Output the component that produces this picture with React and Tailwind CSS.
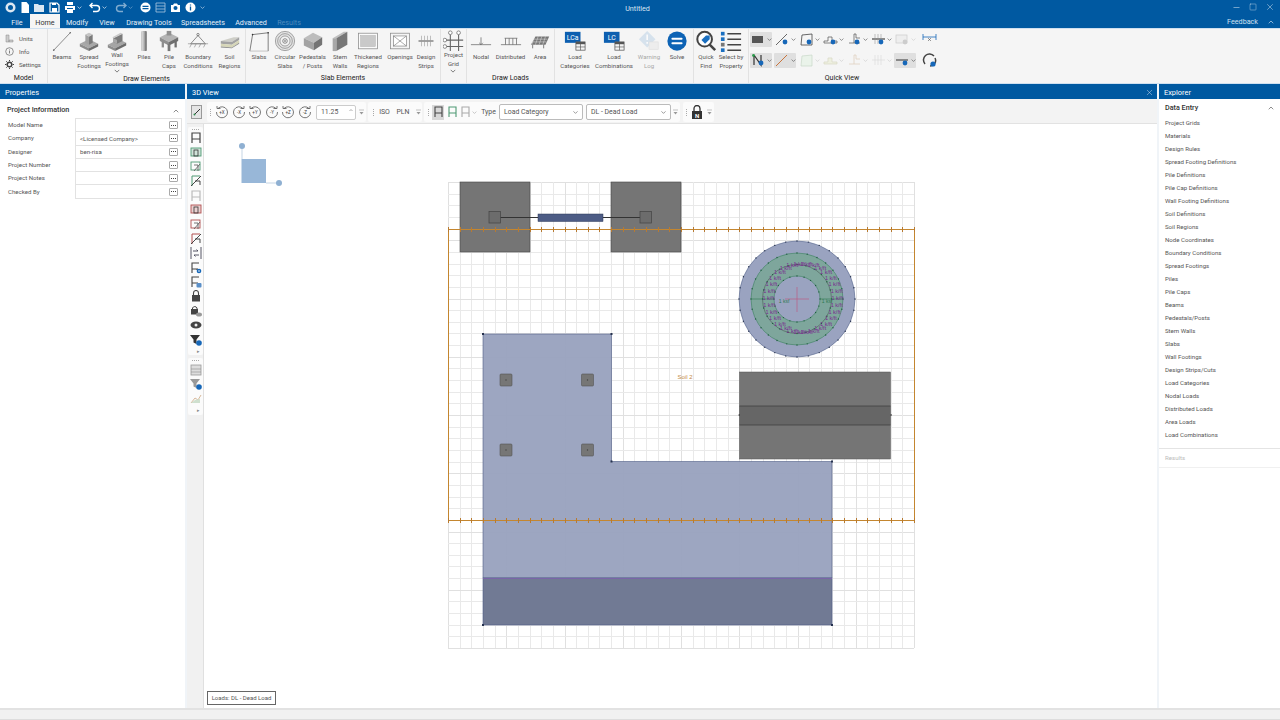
import { ChevronUp, ChevronDown, X, Minus, Square } from "lucide-react";

function Ico({ children, s = 22, box = 24 }) {
  return (
    <svg width={s} height={s} viewBox={`0 0 ${box} ${box}`} className="shrink-0">
      {children}
    </svg>
  );
}

function Chev({ className = "text-[#555]", size = 6 }) {
  return (
    <svg width={size} height={size} viewBox="0 0 8 8" className={className + " shrink-0"}>
      <path d="M1 2.5 4 5.5 7 2.5" fill="none" stroke="currentColor" strokeWidth="1" />
    </svg>
  );
}

function Caret() {
  return (
    <svg width="5" height="8" viewBox="0 0 5 8" className="shrink-0">
      <path d="M0 2h5" stroke="#aaa" strokeWidth=".7" />
      <path d="M.5 4h4L2.5 6.5z" fill="#999" />
    </svg>
  );
}

function Grip() {
  return (
    <div className="flex flex-col gap-[1px] w-[1px] mx-auto">
      <i className="block h-[1px] w-[1px] bg-[#aaa]" />
      <i className="block h-[1px] w-[1px] bg-[#aaa]" />
      <i className="block h-[1px] w-[1px] bg-[#aaa]" />
      <i className="block h-[1px] w-[1px] bg-[#aaa]" />
    </div>
  );
}

function Table({ x = 13, y = 13 }) {
  return (
    <g>
      <rect x={x} y={y} width="10" height="9" fill="#f4f4f4" stroke="#555" strokeWidth=".8" />
      <rect x={x} y={y} width="10" height="2.5" fill="#555" />
      <path d={`M${x + 5} ${y}v9M${x} ${y + 5.5}h10`} stroke="#555" strokeWidth=".7" />
    </g>
  );
}

const icons = {
  beams: (
    <Ico>
      <path d="M3 22 21 3" stroke="#777" strokeWidth=".9" />
      <circle cx="3" cy="22" r=".9" fill="#666" />
      <circle cx="21" cy="3" r=".9" fill="#666" />
    </Ico>
  ),
  spread: (
    <Ico>
      <path d="M2 15 12 10l10 5-10 5z" fill="#a8a8a8" />
      <path d="M2 15l10 5v3L2 18z" fill="#8c8c8c" />
      <path d="M22 15l-10 5v3l10-5z" fill="#6e6e6e" />
      <path d="M8 5v9l4 2V7z" fill="#a2a2a2" />
      <path d="M16 5v9l-4 2V7z" fill="#7b7b7b" />
      <path d="M8 5l4-2 4 2-4 2z" fill="#c4c4c4" />
    </Ico>
  ),
  wall: (
    <Ico>
      <path d="M2 16 14 10l8 4-12 6z" fill="#a5a5a5" />
      <path d="M2 16l8 4v3l-8-4z" fill="#8c8c8c" />
      <path d="M22 14 10 20v3l12-6z" fill="#6b6b6b" />
      <path d="M8 9l10-5v8l-6 3-4-2z" fill="#7b7b7b" />
      <path d="M8 9l4 2v4l-4-2z" fill="#a8a8a8" />
      <path d="M8 9 18 4l-2-1L7 8z" fill="#c8c8c8" />
    </Ico>
  ),
  piles: (
    <Ico>
      <rect x="9" y="1" width="6" height="22" rx="2" fill="#a8a8a8" />
      <rect x="9" y="1" width="2.5" height="22" rx="1" fill="#d0d0d0" />
      <rect x="13" y="1" width="2" height="22" rx="1" fill="#808080" />
    </Ico>
  ),
  caps: (
    <Ico>
      <path d="M2 8 12 3l10 5-10 5z" fill="#b4b4b4" />
      <path d="M2 8l10 5v4L2 12z" fill="#8e8e8e" />
      <path d="M22 8l-10 5v4l10-5z" fill="#6f6f6f" />
      <rect x="10.5" y="15" width="3" height="8" fill="#777" />
      <rect x="4" y="11" width="2.5" height="8" fill="#8d8d8d" />
      <rect x="18" y="11" width="2.5" height="8" fill="#6f6f6f" />
      <rect x="9.5" y="1" width="5" height="5" fill="#909090" />
    </Ico>
  ),
  boundary: (
    <Ico>
      <circle cx="12" cy="5" r="1.3" fill="none" stroke="#666" strokeWidth=".8" />
      <path d="M12 6 4 15h16z" fill="none" stroke="#666" strokeWidth=".8" />
      <path d="M1 15h22M3 19l2-4M8 19l2-4M13 19l2-4M18 19l2-4" stroke="#888" strokeWidth=".7" />
    </Ico>
  ),
  soil: (
    <Ico>
      <path d="M2 12 16 8h6l-8 5z" fill="#cfcfc8" />
      <path d="M2 12l12 1 8-5v3l-8 5-12-1z" fill="#a3a3a3" />
      <path d="M2 15l12 1 8-5v3l-8 5-12-1z" fill="#d6d6b8" />
      <path d="M2 18l12 1 8-5v1l-8 5-12-1z" fill="#8a8a8a" />
    </Ico>
  ),
  slabs: (
    <Ico>
      <path d="M2 23 5 5l17-2v20" fill="none" stroke="#555" strokeWidth=".8" />
      <path d="M2 23h20" stroke="#aaa" strokeWidth=".7" />
      <circle cx="5" cy="5" r=".9" fill="#333" />
      <circle cx="22" cy="3" r=".9" fill="#333" />
    </Ico>
  ),
  circular: (
    <Ico>
      <circle cx="12" cy="12" r="10.5" fill="#e2e2e2" stroke="#888" strokeWidth=".8" />
      <circle cx="12" cy="12" r="8" fill="none" stroke="#888" strokeWidth=".8" />
      <circle cx="12" cy="12" r="5.5" fill="#f3f3f3" stroke="#888" strokeWidth=".8" />
      <circle cx="12" cy="12" r="2.5" fill="none" stroke="#666" strokeWidth=".8" />
      <circle cx="12" cy="12" r=".8" fill="#444" />
    </Ico>
  ),
  pedestal: (
    <Ico>
      <path d="M2 9 12 3l10 5-9 6z" fill="#bdbdbd" />
      <path d="M2 9l11 5v8L2 17z" fill="#a3a3a3" />
      <path d="M22 8l-9 6v8l9-6z" fill="#747474" />
    </Ico>
  ),
  stem: (
    <Ico>
      <path d="M4 9 16 2h4L8 9z" fill="#c0c0c0" />
      <path d="M8 9 20 2v14L8 23z" fill="#777" />
      <path d="M4 9h4v14H4z" fill="#a8a8a8" />
    </Ico>
  ),
  thick: (
    <Ico>
      <rect x="1.5" y="3.5" width="21" height="17" fill="#fafafa" stroke="#888" strokeWidth=".8" />
      <rect x="4" y="6" width="16" height="12" fill="#c9c9c9" stroke="#aaa" strokeWidth=".5" />
    </Ico>
  ),
  openings: (
    <Ico>
      <rect x="1.5" y="3.5" width="21" height="17" fill="#f5f5f5" stroke="#888" strokeWidth=".8" />
      <rect x="5" y="6.5" width="14" height="11" fill="#fff" stroke="#666" strokeWidth=".6" />
      <path d="M5 6.5l14 11M19 6.5 5 17.5" stroke="#666" strokeWidth=".6" />
    </Ico>
  ),
  strips: (
    <Ico s={18}>
      <path d="M2 12h20" stroke="#555" strokeWidth="1.4" />
      <path d="M6 5v14M10 5v14M14 5v14M18 5v14" stroke="#999" strokeWidth=".8" />
    </Ico>
  ),
  grid: (
    <Ico>
      <path d="M8 5v18M17 5v18M1 11h21M1 18h21" stroke="#666" strokeWidth="1.2" />
      <circle cx="8" cy="3" r="2" fill="#fff" stroke="#666" strokeWidth=".8" />
      <circle cx="17" cy="3" r="2" fill="#fff" stroke="#666" strokeWidth=".8" />
      <circle cx="2" cy="11" r="2" fill="#fff" stroke="#666" strokeWidth=".8" />
      <circle cx="2" cy="18" r="2" fill="#fff" stroke="#666" strokeWidth=".8" />
    </Ico>
  ),
  nodal: (
    <Ico>
      <path d="M1 16h22" stroke="#666" strokeWidth=".8" />
      <path d="M12 8v8M10 14l2 2 2-2" stroke="#666" strokeWidth=".8" fill="none" />
    </Ico>
  ),
  distributed: (
    <Ico>
      <path d="M1 16h22M5 9h14M6 9v7M10 9v7M14 9v7M18 9v7" stroke="#666" strokeWidth=".8" />
    </Ico>
  ),
  area: (
    <Ico>
      <path d="M2 16 7 7h15l-4 9z" fill="#777" />
      <path d="M6 7l-3 9M10 7l-3 9M14 7l-3 9M18 7l-3 9M4 10h16M3 13h16" stroke="#eee" strokeWidth=".5" />
      <path d="M4 16v4M16 16v4" stroke="#555" strokeWidth=".8" />
    </Ico>
  ),
  lca: (
    <Ico>
      <rect x="1" y="2" width="17" height="12" fill="#0d5fb0" />
      <text x="9.5" y="11" fontSize="7.5" fill="#fff" textAnchor="middle" fontFamily="Roboto">LCa</text>
      <Table />
    </Ico>
  ),
  lc: (
    <Ico>
      <rect x="1" y="2" width="17" height="12" fill="#0d5fb0" />
      <text x="9.5" y="11" fontSize="7.5" fill="#fff" textAnchor="middle" fontFamily="Roboto">LC</text>
      <Table />
    </Ico>
  ),
  warning: (
    <Ico>
      <path d="M10 1 19 10 10 19 1 10z" fill="#b8d0e6" />
      <path d="M10 5v6M10 13v2" stroke="#fff" strokeWidth="1.8" />
      <rect x="12" y="13" width="10" height="8" fill="#e6e6e6" stroke="#c4c4c4" strokeWidth=".6" />
    </Ico>
  ),
  solve: (
    <Ico>
      <circle cx="12" cy="12" r="10.5" fill="#0d63b5" />
      <path d="M7 9.5h10M7 14.5h10" stroke="#fff" strokeWidth="2.2" strokeLinecap="round" />
    </Ico>
  ),
  find: (
    <Ico>
      <circle cx="10.5" cy="10" r="8" fill="#fff" stroke="#444" strokeWidth="2.2" />
      <path d="M16 16l6 6" stroke="#444" strokeWidth="2.8" />
      <path d="M7 11l5-5h4v4l-5 5z" fill="#1a6fc0" />
    </Ico>
  ),
  select: (
    <Ico>
      <path d="M8 4h15M8 10h15M8 16h15M8 22h15" stroke="#444" strokeWidth="1.6" />
      <rect x="1" y="2" width="4" height="4" fill="#1a6fc0" />
      <rect x="1" y="8" width="4" height="4" fill="#1a6fc0" />
      <rect x="1" y="14" width="4" height="4" fill="#777" />
      <rect x="1" y="20" width="4" height="4" fill="#1a6fc0" />
    </Ico>
  ),
};

const ribbon = [
  {
    label: "Draw Elements", w: 198,
    items: [
      { w: 28, i: "beams", t: ["Beams"] },
      { w: 26, i: "spread", t: ["Spread", "Footings"] },
      { w: 30, i: "wall", t: ["Wall", "Footings"], up: true },
      { w: 24, i: "piles", t: ["Piles"] },
      { w: 26, i: "caps", t: ["Pile", "Caps"] },
      { w: 32, i: "boundary", t: ["Boundary", "Conditions"] },
      { w: 31, i: "soil", t: ["Soil", "Regions"] },
    ],
  },
  {
    label: "Slab Elements", w: 195,
    items: [
      { w: 26, i: "slabs", t: ["Slabs"] },
      { w: 26, i: "circular", t: ["Circular", "Slabs"] },
      { w: 29, i: "pedestal", t: ["Pedestals", "/ Posts"] },
      { w: 26, i: "stem", t: ["Stem", "Walls"] },
      { w: 30, i: "thick", t: ["Thickened", "Regions"] },
      { w: 34, i: "openings", t: ["Openings"] },
      { w: 18, i: "strips", t: ["Design", "Strips"] },
    ],
  },
  { label: "", w: 26, items: [{ w: 25, i: "grid", t: ["Project", "Grid"], up: true }] },
  {
    label: "Draw Loads", w: 88,
    items: [
      { w: 28, i: "nodal", t: ["Nodal"] },
      { w: 31, i: "distributed", t: ["Distributed"] },
      { w: 28, i: "area", t: ["Area"] },
    ],
  },
  {
    label: "", w: 139,
    items: [
      { w: 40, i: "lca", t: ["Load", "Categories"] },
      { w: 38, i: "lc", t: ["Load", "Combinations"] },
      { w: 32, i: "warning", t: ["Warning", "Log"], off: true },
      { w: 24, i: "solve", t: ["Solve"] },
    ],
  },
  {
    label: "", w: 55,
    items: [
      { w: 24, i: "find", t: ["Quick", "Find"] },
      { w: 26, i: "select", t: ["Select by", "Property"] },
    ],
  },
];

const qvPin = <circle cx="10" cy="10" r="2.4" fill="#1667b8" />;

const quickView = [
  { on: true, g: <rect x="1" y="4" width="11" height="7" fill="#555" /> },
  { g: <><path d="M1 13 12 2" stroke="#444" strokeWidth=".8" />{qvPin}</> },
  { g: <><path d="M2 13 3 3l10-1v11z" fill="none" stroke="#444" strokeWidth=".8" />{qvPin}</> },
  { g: <><path d="M1 9h4V5h4v4h5v2H1z" fill="none" stroke="#555" strokeWidth=".7" />{qvPin}</> },
  { g: <><path d="M2 11h5V2h2v4h4M7 11h6" fill="none" stroke="#555" strokeWidth=".7" />{qvPin}</> },
  { g: <><path d="M1 7h13" stroke="#444" strokeWidth="1.2" /><path d="M4 2v10M7 2v10M10 2v10" stroke="#999" strokeWidth=".6" />{qvPin}</> },
  { faded: true, g: <><rect x="1" y="3" width="11" height="8" fill="#eee" stroke="#ccc" strokeWidth=".7" /><circle cx="10" cy="10" r="2.4" fill="#ccc" /></> },
  { plain: true, g: <><path d="M1 5h13M1 2v6M14 2v6" stroke="#1667b8" strokeWidth=".8" /><path d="M6 6l3 3M9 6 6 9" stroke="#555" strokeWidth=".6" /></> },
  { on: true, g: <><path d="M3 2v10M3 2l7 10V2" fill="none" stroke="#333" strokeWidth="1.2" /><circle cx="2.5" cy="2.5" r="1.4" fill="#2a9a4a" />{qvPin}</> },
  { on: true, g: <path d="M1 13 12 2" stroke="#c8743c" strokeWidth="1" /> },
  { faded: true, g: <path d="M2 13 3 3l10-1v11z" fill="#eaf3ea" stroke="#c8d8c8" strokeWidth=".7" /> },
  { faded: true, g: <path d="M1 9h4V5h4v4h5v2H1z" fill="#eef0e0" stroke="#d8d8c4" strokeWidth=".7" /> },
  { faded: true, g: <path d="M2 11h5V2h2v4h4M7 11h6" fill="none" stroke="#e0d0c0" strokeWidth=".8" /> },
  { faded: true, g: <path d="M1 7h13M4 2v10M7 2v10M10 2v10" stroke="#ddd" strokeWidth=".7" /> },
  { on: true, g: <><path d="M1 7h12" stroke="#888" strokeWidth="2" />{qvPin}</> },
  { plain: true, g: <><path d="M3 11A5.5 5.5 0 0 1 12 3M13 5a5.500 5.500 0 0 1-5 8" fill="none" stroke="#444" strokeWidth="1.5" /><circle cx="11" cy="11" r="2.6" fill="#1667b8" /></> },
];

function RibbonItem({ item }) {
  return (
    <div style={{ width: item.w }} className={"flex flex-col items-center shrink-0" + (item.off ? " opacity-50" : "")}>
      <div className="h-[22px] mt-[1px] flex items-center justify-center">{icons[item.i]}</div>
      <div className={"flex flex-col items-center whitespace-nowrap leading-[9px] text-[6.1px] text-[#555]" + (item.up ? " -mt-[2px]" : "")}>
        {item.t.map((l) => (
          <span key={l}>{l}</span>
        ))}
        {item.up && <Chev size={6} />}
      </div>
    </div>
  );
}

function RibbonGroup({ group }) {
  return (
    <div style={{ width: group.w }} className="shrink-0 flex flex-col border-r border-[#e2e2e2]">
      <div className="flex h-[44px]">
        {group.items.map((it) => (
          <RibbonItem key={it.i} item={it} />
        ))}
      </div>
      <div className="h-[11px] pt-[1px] leading-[11px] text-center text-[7px] text-[#222]">{group.label}</div>
    </div>
  );
}

function Ribbon() {
  return (
    <div className="h-[56px] flex bg-[#f5f5f5] border-t border-b border-[#cfe0f0] shrink-0">
      <div className="w-[48px] shrink-0 flex flex-col border-r border-[#e2e2e2]">
        <div className="h-[44px] flex flex-col pt-[3px] pl-[5px] text-[6px] text-[#555]">
          <div className="h-[13px] flex items-center gap-[5px]">
            <svg width="9" height="9" viewBox="0 0 9 9"><path d="M1 1h3v7H1zM4 6h4v2H4z" fill="#ccc" stroke="#888" strokeWidth=".5" /></svg>
            Units
          </div>
          <div className="h-[13px] flex items-center gap-[5px]">
            <svg width="9" height="9" viewBox="0 0 9 9"><circle cx="4.500" cy="4.500" r="3.800" fill="none" stroke="#666" strokeWidth=".7" /><path d="M4.500 2.500v1M4.500 4v2.500" stroke="#666" strokeWidth=".8" /></svg>
            Info
          </div>
          <div className="h-[13px] flex items-center gap-[5px]">
            <svg width="9" height="9" viewBox="0 0 9 9"><circle cx="4.500" cy="4.500" r="2.300" fill="none" stroke="#444" strokeWidth="1.500" /><path d="M4.500 0v9M0 4.500h9M1.300 1.300l6.400 6.400M7.700 1.300 1.300 7.700" stroke="#444" strokeWidth="1" strokeDasharray="1.300 6.400" /></svg>
            Settings
          </div>
        </div>
        <div className="h-[11px] pt-[1px] leading-[11px] text-center text-[7px] text-[#222]">Model</div>
      </div>
      {ribbon.map((g, i) => (
        <RibbonGroup key={i} group={g} />
      ))}
      <div className="w-[186px] shrink-0 flex flex-col">
        <div className="h-[44px] pt-[1px] pl-[1px] grid grid-cols-[repeat(8,24px)] auto-rows-[21px]">
          {quickView.map((q, i) => (
            <div key={i} className={"flex items-center justify-center gap-[1px] h-[15px] mt-[2px] w-[22px] rounded-[1px]" + (q.on ? " bg-[#dfdfdf]" : "")}>
              <svg width="15" height="15" viewBox="0 0 15 15" className="shrink-0">{q.g}</svg>
              {!q.plain && <Chev size={5} className={q.faded ? "text-[#ccc]" : "text-[#555]"} />}
            </div>
          ))}
        </div>
        <div className="h-[11px] pt-[1px] leading-[11px] text-center text-[7px] text-[#222]">Quick View</div>
      </div>
    </div>
  );
}

function QuickAccess() {
  return (
    <div className="flex items-center h-[14px] pl-[5px] gap-[4px] text-white">
      <svg width="11" height="11" viewBox="0 0 11 11"><circle cx="5.500" cy="5.500" r="5" fill="#dbe7f2" /><circle cx="5.500" cy="5.500" r="2.500" fill="#0059a1" /></svg>
      <svg width="10" height="11" viewBox="0 0 10 11"><path d="M1.500 0h5l2.500 3v8h-7.500z" fill="#fff" /></svg>
      <svg width="11" height="11" viewBox="0 0 11 11"><path d="M0 2h4l1 1h5v7H0z" fill="#dbe7f2" /></svg>
      <svg width="11" height="11" viewBox="0 0 11 11"><path d="M1 1h7l2 2v7H1z" fill="none" stroke="#fff" strokeWidth="1.200" /><path d="M3 6h5v4H3zM3 1h4v2H3z" fill="#fff" /></svg>
      <div className="flex items-center gap-[1px]">
        <svg width="12" height="11" viewBox="0 0 12 11"><path d="M3 0h6v3H3zM1 4h10v4H9V6H3v2H1zM3 7h6v4H3z" fill="#fff" /></svg>
        <Chev size={5} className="text-white" />
      </div>
      <div className="flex items-center gap-[1px] ml-[3px]">
        <svg width="12" height="11" viewBox="0 0 12 11"><path d="M3.500 1 1 3.500 3.500 6M1 3.500h6.500a3 3 0 0 1 0 6H4" fill="none" stroke="#fff" strokeWidth="1.400" /></svg>
        <Chev size={5} className="text-white" />
      </div>
      <div className="flex items-center gap-[1px] ml-[4px] opacity-50">
        <svg width="12" height="11" viewBox="0 0 12 11"><path d="M8.500 1 11 3.500 8.500 6M11 3.500H4.500a3 3 0 0 0 0 6H8" fill="none" stroke="#fff" strokeWidth="1.400" /></svg>
        <Chev size={5} className="text-white" />
      </div>
      <svg width="11" height="11" viewBox="0 0 11 11" className="ml-[3px]"><circle cx="5.500" cy="5.500" r="5" fill="#fff" /><path d="M2.500 4.300h6M2.500 6.700h6" stroke="#0059a1" strokeWidth="1.200" /></svg>
      <svg width="11" height="11" viewBox="0 0 11 11"><path d="M1 1h9v9H1zM1 4h9M1 7h9" fill="none" stroke="#a9c6e0" strokeWidth=".8" /></svg>
      <svg width="11" height="11" viewBox="0 0 11 11"><path d="M1 3h2l1-1.500h3L8 3h2v7H1z" fill="#fff" /><circle cx="5.500" cy="6" r="2" fill="#0059a1" /></svg>
      <svg width="11" height="11" viewBox="0 0 11 11"><circle cx="5.500" cy="5.500" r="5" fill="#fff" /><path d="M5.500 2.500v1M5.500 4.500v4" stroke="#0059a1" strokeWidth="1.300" /></svg>
      <Chev size={5} className="text-[#cfe0f0]" />
    </div>
  );
}

const tabs = [
  ["File", 26],
  ["Home", 30],
  ["Modify", 34],
  ["View", 26],
  ["Drawing Tools", 58],
  ["Spreadsheets", 50],
  ["Advanced", 46],
  ["Results", 30],
];

function TitleBar() {
  return (
    <div className="h-[28px] bg-[#0059a1] text-white shrink-0 flex flex-col">
      <div className="flex h-[14px]">
        <div className="flex-1">
          <QuickAccess />
        </div>
        <div className="text-[7.2px] pt-[1px] leading-[15px] text-[#dbe7f2]">Untitled</div>
        <div className="flex-1 flex justify-end items-center pr-[5px] gap-[8px]">
          <Minus size={9} strokeWidth={1.2} />
          <Square size={8} strokeWidth={1} />
          <X size={10} strokeWidth={1} />
        </div>
      </div>
      <div className="flex h-[14px] pl-[4px] text-[7.2px]">
        {tabs.map(([t, w]) => (
          <div
            key={t}
            style={{ width: w }}
            className={
              "shrink-0 text-center leading-[15px] pt-[1px] " +
              (t === "Home" ? "bg-[#f5f5f5] text-[#333]" : t === "Results" ? "text-[#4d8bbd]" : "text-[#e6eff7]")
            }
          >
            {t}
          </div>
        ))}
        <div className="flex-1 flex justify-end items-center pr-[5px] pt-[2px] gap-[9px] text-[#cfe0f0]">
          <span>Feedback</span>
          <ChevronUp size={8} />
        </div>
      </div>
    </div>
  );
}

function PanelHead({ title, children }) {
  return (
    <div className="h-[15px] pt-[2px] bg-[#0059a1] text-white text-[7.4px] flex items-center justify-between shrink-0 pl-[5px] pr-[3px]">
      <span>{title}</span>
      {children}
    </div>
  );
}

const props = [
  ["Model Name", ""],
  ["Company", "<Licensed Company>"],
  ["Designer", "ben-risa"],
  ["Project Number", ""],
  ["Project Notes", ""],
  ["Checked By", ""],
];

function Properties() {
  return (
    <div className="w-[185px] shrink-0 flex flex-col bg-white">
      <PanelHead title="Properties" />
      <div className="flex items-center justify-between h-[19px] pt-[4px] pl-[7px] pr-[5px] text-[7.2px] font-medium text-[#333]">
        <span>Project Information</span>
        <ChevronUp size={8} className="text-[#555]" />
      </div>
      <div className="flex flex-col pl-[8px] pr-[3px]">
        {props.map(([k, v]) => (
          <div key={k} className="flex h-[13.3px] items-center text-[6.1px] text-[#555]">
            <span className="w-[67px] shrink-0">{k}</span>
            <div className="flex-1 h-full flex items-center justify-between border border-b-0 border-[#e2e2e2] pl-[4px] pr-[3px]">
              <span>{v}</span>
              <span className="h-[8px] w-[9px] flex items-center justify-center gap-[1px] border border-[#aaa] rounded-[1px]">
                <i className="block w-[1px] h-[1px] bg-[#444]" />
                <i className="block w-[1px] h-[1px] bg-[#444]" />
                <i className="block w-[1px] h-[1px] bg-[#444]" />
              </span>
            </div>
          </div>
        ))}
        <div className="ml-[67px] border-t border-[#e2e2e2]" />
      </div>
    </div>
  );
}

const rotations = [
  ["+X", false],
  ["-X", true],
  ["+Y", false],
  ["-Y", true],
  ["+Z", false],
  ["-Z", true],
];

function Rotate({ label, cw }) {
  return (
    <svg width="14" height="14" viewBox="0 0 14 14">
      <path
        d={cw ? "M11 3.500A5.500 5.500 0 1 0 12.500 7" : "M3 3.500A5.500 5.500 0 1 1 1.500 7"}
        fill="none"
        stroke="#555"
        strokeWidth=".8"
      />
      <path d={cw ? "M8.500 3.500H12V1" : "M5.500 3.500H2V1"} fill="none" stroke="#555" strokeWidth=".8" />
      <text x="7" y="9" fontSize="4.500" textAnchor="middle" fill="#444" fontFamily="Roboto">{label}</text>
    </svg>
  );
}

function Rr({ c = "#444" }) {
  return (
    <svg width="9" height="12" viewBox="0 0 9 12">
      <path d="M1 11V1h7v10M1 7h7" fill="none" stroke={c} strokeWidth="1.100" />
    </svg>
  );
}

function Select({ w, text }) {
  return (
    <div style={{ width: w }} className="h-[16px] shrink-0 border border-[#bbb] rounded-[2px] bg-white flex items-center justify-between pl-[4px] pr-[3px] text-[6.9px] text-[#555]">
      <span>{text}</span>
      <ChevronDown size={7} className="text-[#555]" />
    </div>
  );
}

function Section({ w, children }) {
  return (
    <div style={{ width: w }} className="h-[20px] shrink-0 flex items-center bg-[#fbfbfb] rounded-[2px]">
      {children}
    </div>
  );
}

function TopTools() {
  return (
    <div className="h-[25px] pt-[2px] shrink-0 bg-[#f3f3f3] border-b border-[#e2e2e2] flex items-center pl-[4px] text-[6.9px] text-[#555]">
      <div className="w-[11px] h-[14px] border border-[#999] bg-[#e4e4e4] flex items-center justify-center shrink-0">
        <svg width="8" height="8" viewBox="0 0 8 8"><path d="M1 7 7 1" stroke="#333" strokeWidth="1" /><circle cx="1.500" cy="6.500" r="1" fill="#2a8a4a" /></svg>
      </div>
      <div className="w-[5px] shrink-0" />
      <Section w={159}>
        <div className="w-[7px] shrink-0"><Grip /></div>
        {rotations.map(([l, cw]) => (
          <div key={l} className="w-[16.5px] shrink-0 flex justify-center"><Rotate label={l} cw={cw} /></div>
        ))}
        <div className="w-[40px] h-[15px] ml-[3px] shrink-0 border border-[#ccc] rounded-[2px] bg-white flex items-center justify-between pl-[4px] pr-[2px]">
          <span>11.25</span>
          <svg width="4" height="8" viewBox="0 0 4 8"><path d="M.5 3 2 1.500 3.500 3" fill="none" stroke="#777" strokeWidth=".6" /></svg>
        </div>
        <div className="w-[10px] shrink-0 flex justify-center"><Caret /></div>
      </Section>
      <div className="w-[2px] shrink-0" />
      <Section w={54}>
        <div className="w-[10px] shrink-0"><Grip /></div>
        <span className="w-[13px] text-center shrink-0">ISO</span>
        <span className="w-[24px] text-center shrink-0">PLN</span>
        <div className="w-[7px] flex justify-center shrink-0"><Caret /></div>
      </Section>
      <div className="w-[2px] shrink-0" />
      <Section w={256}>
        <div className="w-[8px] shrink-0"><Grip /></div>
        <div className="w-[12px] h-[15px] mr-[1px] shrink-0 bg-[#d8d8d8] flex items-center justify-center"><Rr /></div>
        <div className="w-[14px] shrink-0 flex justify-center"><Rr c="#4f9a74" /></div>
        <div className="w-[12px] shrink-0 flex justify-center"><Rr c="#aaa" /></div>
        <div className="w-[7px] shrink-0 flex justify-center"><Chev size={5} className="text-[#aaa]" /></div>
        <span className="w-[21px] shrink-0 text-center">Type</span>
        <Select w={84} text="Load Category" />
        <div className="w-[3px] shrink-0" />
        <Select w={85} text="DL - Dead Load" />
        <div className="w-[9px] shrink-0 flex justify-center"><Caret /></div>
      </Section>
      <div className="w-[3px] shrink-0" />
      <Section w={31}>
        <div className="w-[6px] shrink-0"><Grip /></div>
        <div className="w-[16px] shrink-0 flex justify-center">
          <svg width="12" height="15" viewBox="0 0 12 15"><path d="M3 6V3.500a3 3 0 0 1 6 0V6" fill="none" stroke="#333" strokeWidth="1.300" /><rect x="1" y="6" width="10" height="8" fill="#333" /><text x="6" y="12.800" fontSize="6" fill="#fff" textAnchor="middle" fontFamily="Roboto" fontWeight="700">N</text></svg>
        </div>
        <div className="w-[9px] shrink-0 flex justify-center"><Caret /></div>
      </Section>
    </div>
  );
}

function SideIcon({ c = "#444", shape }) {
  return (
    <svg width="12" height="12" viewBox="0 0 12 12">
      {shape === "r" && <path d="M2 11V1h8v10M2 7h8" fill="none" stroke={c} strokeWidth="1.200" />}
      {shape === "box" && <><rect x="1" y="1" width="10" height="8" fill={c} fillOpacity=".25" stroke={c} strokeWidth=".9" /><rect x="4" y="3" width="4" height="6" fill="none" stroke="#333" strokeWidth=".8" /></>}
      {shape === "slant" && <><rect x="1" y="1" width="9" height="8" fill="none" stroke={c} strokeWidth=".9" /><path d="M4 10 10 3M4 4h4v6" fill="none" stroke="#555" strokeWidth=".8" /></>}
      {shape === "cross" && <><path d="M2 11V1h8" fill="none" stroke={c} strokeWidth="1" /><path d="M1 11 11 1M5 6h5v4" fill="none" stroke="#333" strokeWidth=".9" /></>}
      {shape === "arrows" && <path d="M1 0v12M11 0v12M3 4h5M8 4 6.500 2.500M9 8H4M4 8l1.500 1.500" fill="none" stroke="#445" strokeWidth=".9" />}
      {shape === "gear" && <><path d="M2 11V1h7M2 7h6M7 7v1" fill="none" stroke="#444" strokeWidth="1.100" /><circle cx="9" cy="9" r="2.300" fill="#1667b8" /><circle cx="9" cy="9" r=".8" fill="#fff" /></>}
      {shape === "lockR" && <><path d="M2 11V1h7M2 7h6" fill="none" stroke="#444" strokeWidth="1.100" /><rect x="6.500" y="7" width="5" height="4.500" rx="1" fill="#5a8fc8" /></>}
      {shape === "lock" && <><path d="M3.500 5V3a2.500 2.500 0 0 1 5 0v2" fill="none" stroke="#444" strokeWidth="1.100" /><rect x="2" y="5" width="8" height="6.500" fill="#444" /></>}
      {shape === "lockEye" && <><path d="M2.500 4V3a2.500 2.500 0 0 1 4.500 0v1" fill="none" stroke="#444" strokeWidth="1" /><rect x="1" y="4" width="7" height="5.500" fill="#444" /><ellipse cx="9" cy="9.500" rx="3" ry="2" fill="#999" /></>}
      {shape === "eye" && <><ellipse cx="6" cy="6" rx="5.500" ry="3.500" fill="#444" /><circle cx="6" cy="6" r="1.500" fill="#eee" /></>}
      {shape === "filter" && <><path d="M0 1h10L6.500 5.500V10L3.500 8.500v-3z" fill={c} /><circle cx="9" cy="9" r="2.800" fill="#1667b8" /></>}
      {shape === "sheet" && <><rect x="1" y="1" width="10" height="10" fill="#ddd" stroke="#999" strokeWidth=".8" /><path d="M1 5h10M1 8h10" stroke="#999" strokeWidth=".7" /></>}
      {shape === "chart" && <><path d="M1 11 5 6l3 2 3-5" fill="none" stroke="#d8b89a" strokeWidth="1" /><path d="M1 11h9V7L5 8z" fill="#cfe0cf" /></>}
    </svg>
  );
}

const sideA = [
  ["r"], ["box", "#4f9a74"], ["slant", "#4f9a74"], ["cross", "#4f9a74"], ["r", "#bbb"],
  ["box", "#b25050"], ["slant", "#b25050"], ["cross", "#b25050"], ["arrows"], ["gear"],
  ["lockR"], ["lock"], ["lockEye"], ["eye"], ["filter", "#333"],
];
const sideB = [["sheet"], ["filter", "#999"], ["chart"]];

function SideTools() {
  return (
    <div className="w-[17px] shrink-0 bg-[#f1f1f1] border-r border-[#e0e0e0] pt-[3px] pl-[1px] flex flex-col gap-[3px]">
      <div className="w-[15px] bg-[#fbfbfb] rounded-[2px] flex flex-col items-center">
        <div className="h-[4px] flex items-center gap-[1px]"><i className="w-[1px] h-[1px] bg-[#aaa]" /><i className="w-[1px] h-[1px] bg-[#aaa]" /><i className="w-[1px] h-[1px] bg-[#aaa]" /><i className="w-[1px] h-[1px] bg-[#aaa]" /></div>
        {sideA.map(([s, c], i) => (
          <div key={i} className="h-[14.4px] flex items-center"><SideIcon shape={s} c={c} /></div>
        ))}
        <div className="h-[8px] text-[#888] text-[5px] leading-[8px] pl-[6px]">▸</div>
      </div>
      <div className="w-[15px] bg-[#fbfbfb] rounded-[2px] flex flex-col items-center">
        <div className="h-[5px] flex items-center gap-[1px]"><i className="w-[1px] h-[1px] bg-[#aaa]" /><i className="w-[1px] h-[1px] bg-[#aaa]" /><i className="w-[1px] h-[1px] bg-[#aaa]" /><i className="w-[1px] h-[1px] bg-[#aaa]" /></div>
        {sideB.map(([s, c], i) => (
          <div key={i} className="h-[14px] flex items-center"><SideIcon shape={s} c={c} /></div>
        ))}
        <div className="h-[10px] text-[#888] text-[5px] leading-[10px] pl-[6px]">▸</div>
      </div>
    </div>
  );
}

function ringDots(r, n, cx = 797, cy = 299, c = "#26324f") {
  return Array.from({ length: n }, (_, i) => {
    const a = (i / n) * Math.PI * 2;
    return <circle key={i} cx={cx + r * Math.cos(a)} cy={cy + r * Math.sin(a)} r=".7" fill={c} />;
  });
}

function Drawing() {
  const step = 466 / 40;
  const lines = Array.from({ length: 41 }, (_, i) => i);
  const ticks = Array.from({ length: 41 }, (_, i) => Math.round(448 + i * step) + 0.5);
  // line load labels sit on the middle ring, text starts at the node
  const labels = Array.from({ length: 30 }, (_, i) => {
    const a = (i / 30) * Math.PI * 2;
    return (
      <text key={i} x={797 + 34.5 * Math.cos(a)} y={300 + 34.5 * Math.sin(a)} fontSize="5.5" fill="#7a2a90" fontFamily="Liberation Sans">
        1 k/ft
      </text>
    );
  });
  const foot = (x, y) => <rect x={x - 6} y={y - 6} width="12" height="12" fill="#767676" stroke="#555" strokeWidth=".6" rx="1" />;

  return (
    <svg viewBox="204 124 953 584" className="w-full h-full block">
      {/* axis widget */}
      <path d="M242 146v13M266 183h13" stroke="#c5d5e5" strokeWidth="1" />
      <rect x="241.500" y="159" width="24.500" height="24" fill="#98b7d8" />
      <circle cx="242" cy="146" r="3" fill="#8fb0d2" />
      <circle cx="279" cy="183" r="3" fill="#8fb0d2" />

      {/* grid */}
      {lines.map((i) => (
        <g key={i}>
          <path d={`M${Math.round(448 + i * step) + 0.5} 182V648`} stroke={i % 5 === 0 ? "#e0e0e0" : "#e9e9e9"} strokeWidth="1" />
          <path d={`M448 ${Math.round(182 + i * step) + 0.5}H914`} stroke={i % 5 === 0 ? "#e0e0e0" : "#e9e9e9"} strokeWidth="1" />
        </g>
      ))}

      {/* footings */}
      <rect x="460" y="182" width="70" height="70" fill="#757575" stroke="#444" strokeWidth=".6" />
      <rect x="611" y="182" width="70" height="70" fill="#757575" stroke="#444" strokeWidth=".6" />
      <path d="M500 217.500h140" stroke="#333" strokeWidth="1" />
      <rect x="489" y="211.500" width="11.500" height="11.500" fill="#6c6c6c" stroke="#444" strokeWidth=".7" />
      <rect x="640" y="211.500" width="11.500" height="11.500" fill="#6c6c6c" stroke="#444" strokeWidth=".7" />
      <rect x="538" y="214" width="65" height="7.500" fill="#4d5c85" stroke="#2f3a58" strokeWidth=".5" />

      <text x="685" y="378.500" fontSize="6" fill="#c48a45" textAnchor="middle" fontFamily="Liberation Sans">Soil 2</text>

      {/* slab */}
      <path d="M483 334H611.500V461.500H832V578H483z" fill="#9aa3bf" fillOpacity=".97" stroke="#4d5c85" strokeWidth=".6" />
      <rect x="483" y="578" width="349" height="47" fill="#717a94" stroke="#4d5c85" strokeWidth=".6" />
      <path d="M483 578.500h349" stroke="#7a64a8" strokeWidth="1" />
      {[[483, 334], [611.5, 334], [611.5, 461.5], [832, 461.5], [832, 625], [483, 625]].map(([x, y]) => (
        <rect key={x + "-" + y} x={x - 1} y={y - 1} width="2" height="2" fill="#26324f" />
      ))}
      {foot(506, 380)}
      {foot(587.500, 380)}
      {foot(506, 450)}
      {foot(587.500, 450)}
      {[[506, 380], [587.5, 380], [506, 450], [587.5, 450]].map(([x, y]) => (
        <circle key={x + "," + y} cx={x} cy={y} r=".7" fill="#444" />
      ))}

      {/* circular slab */}
      <circle cx="797" cy="299" r="58" fill="#9aa3c0" stroke="#4d5c85" strokeWidth=".5" />
      <circle cx="797" cy="299" r="46" fill="#7ea69c" stroke="#2f7a52" strokeWidth=".5" />
      <circle cx="797" cy="299" r="34.500" fill="none" stroke="#333" strokeWidth=".4" />
      <circle cx="797" cy="299" r="23" fill="#9aa3c0" stroke="#2f7a52" strokeWidth=".5" />
      {ringDots(58, 32)}
      {ringDots(46, 28, 797, 299, "#1f5f3f")}
      {ringDots(34.5, 24, 797, 299, "#1f5f3f")}
      {ringDots(23, 20, 797, 299, "#1f5f3f")}
      <path d="M751 299h23M820 299h23" stroke="#2f7a52" strokeWidth=".6" />
      {labels}
      <path d="M797 287v25M785 299h24" stroke="#c0507a" strokeWidth=".6" />
      <text x="784" y="303" fontSize="5" fill="#2f7a52" textAnchor="middle" fontFamily="Liberation Sans">1 ksf</text>
      <text x="827" y="303" fontSize="5" fill="#2f7a52" textAnchor="middle" fontFamily="Liberation Sans">1 ksf</text>

      {/* wall footing */}
      <rect x="739.500" y="372" width="151" height="87" fill="#757575" stroke="#555" strokeWidth=".5" />
      <rect x="739.500" y="406" width="151" height="19" fill="#666" />
      <path d="M739.500 406h151M739.500 425h151" stroke="#3a3a3a" strokeWidth=".7" />
      <path d="M738.500 415h1.500M890.500 415h1.500" stroke="#222" strokeWidth="1" />

      {/* soil region, drawn over everything */}
      <path d="M448.500 229.500H914.500V520.500H448.500z" fill="none" stroke="#c4862f" strokeWidth="1" />
      {ticks.map((x) => (
        <g key={x}>
          <path d={`M${x} 227v5`} stroke="#b87a30" strokeWidth="1" />
          <path d={`M${x} 518v5`} stroke="#b87a30" strokeWidth="1" />
        </g>
      ))}
    </svg>
  );
}

const explorer = [
  "Project Grids", "Materials", "Design Rules", "Spread Footing Definitions", "Pile Definitions",
  "Pile Cap Definitions", "Wall Footing Definitions", "Soil Definitions", "Soil Regions", "Node Coordinates",
  "Boundary Conditions", "Spread Footings", "Piles", "Pile Caps", "Beams", "Pedestals/Posts", "Stem Walls",
  "Slabs", "Wall Footings", "Design Strips/Cuts", "Load Categories", "Nodal Loads", "Distributed Loads",
  "Area Loads", "Load Combinations",
];

function Explorer() {
  return (
    <div className="w-[121px] shrink-0 flex flex-col bg-white">
      <PanelHead title="Explorer" />
      <div className="h-[17px] pt-[1px] flex items-center justify-between pl-[6px] pr-[5px] text-[7.2px] font-medium text-[#333]">
        <span>Data Entry</span>
        <ChevronUp size={8} className="text-[#555]" />
      </div>
      <div className="flex flex-col pl-[6px] pb-[7px] border-b border-[#e4e4e4]">
        {explorer.map((e) => (
          <div key={e} className="h-[13px] leading-[13px] text-[6.1px] text-[#555] whitespace-nowrap">{e}</div>
        ))}
      </div>
      <div className="h-[19px] flex items-center pl-[6px] text-[6.1px] text-[#bbb] border-b border-[#f0f0f0]">Results</div>
    </div>
  );
}

export default function App() {
  return (
    <div className="h-screen w-full overflow-hidden flex flex-col bg-white font-['Roboto',sans-serif]">
      <TitleBar />
      <Ribbon />
      <div className="flex-1 min-h-0 flex gap-[2px] bg-[#f0f4f8]">
        <Properties />
        <div className="flex-1 min-w-0 flex flex-col bg-white">
          <PanelHead title="3D View">
            <X size={9} strokeWidth={1.2} className="text-[#dbe7f2]" />
          </PanelHead>
          <TopTools />
          <div className="flex-1 min-h-0 flex">
            <SideTools />
            <div className="flex-1 min-w-0 relative">
              <Drawing />
              <div className="absolute left-[3px] bottom-[3px] h-[14px] w-[69px] border border-[#666] bg-white text-[6px] leading-[12px] text-center text-[#555]">
                Loads: DL - Dead Load
              </div>
            </div>
          </div>
        </div>
        <Explorer />
      </div>
      <div className="h-[12px] shrink-0 bg-[#f1f1f1] border-t-2 border-[#e2e2e2] border-b border-b-[#ddd]" />
    </div>
  );
}
